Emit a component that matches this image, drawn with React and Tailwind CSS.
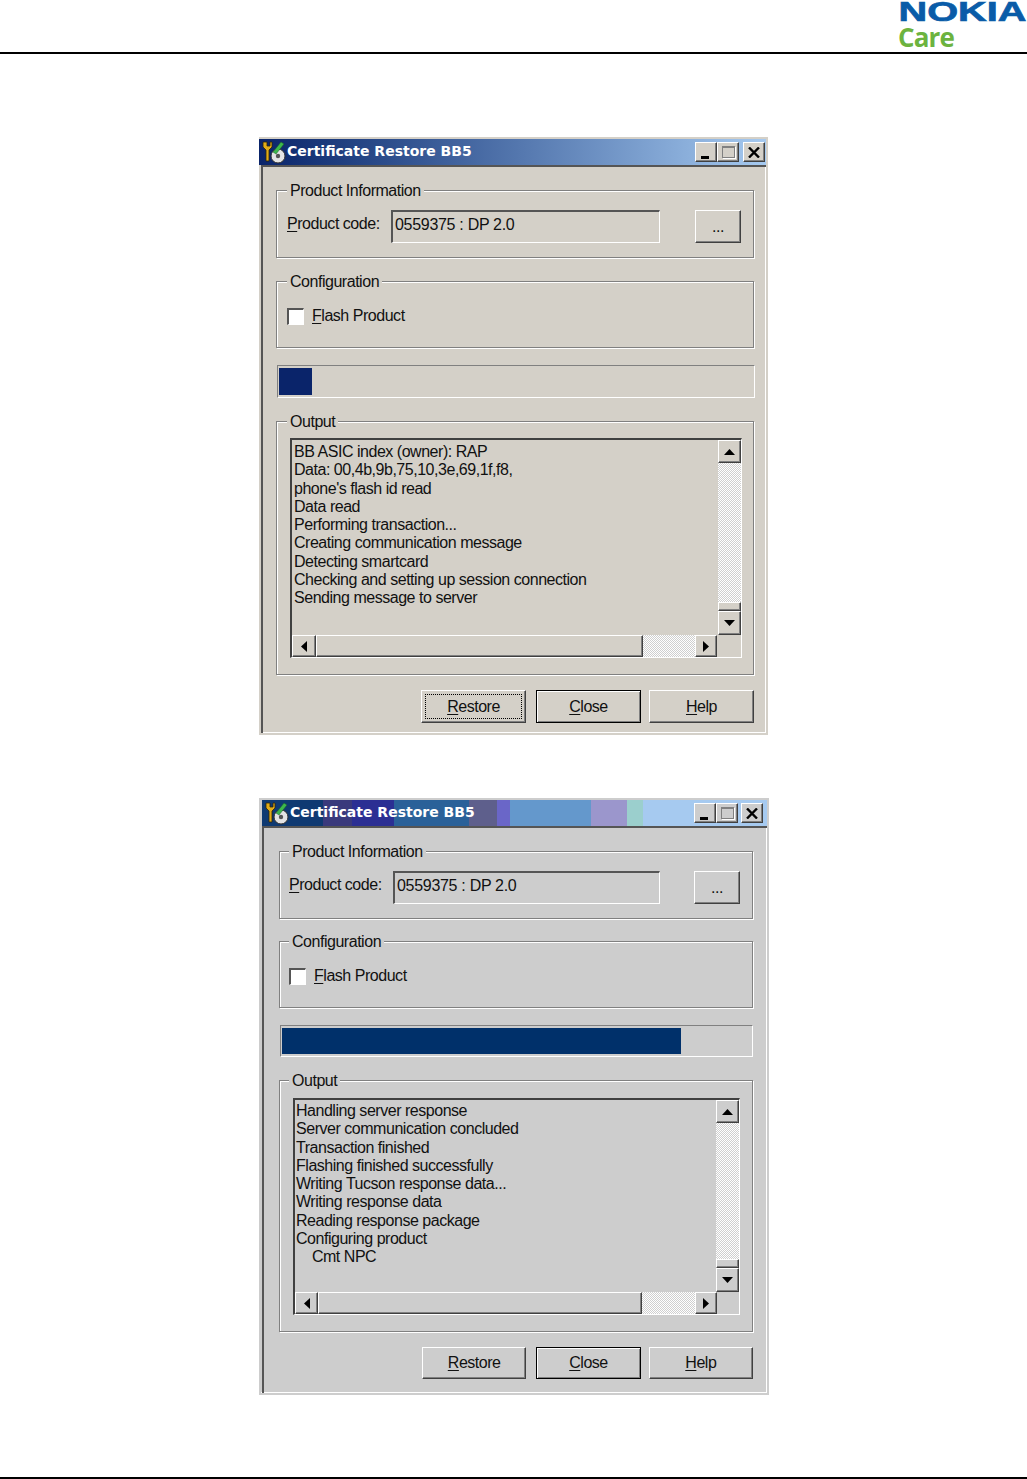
import React from 'react';

const FONT = { fontFamily: '"Liberation Sans", Arial, sans-serif' };

const WINDOWS = [
  {
    bg: 'bg-[#d4d0c8]',
    shell: 'ml-[259px] mt-[83px] w-[509px] h-[598px] border-[#d4d0c8]',
    title: 'bg-gradient-to-r from-[#0a246a] to-[#a6caf0] -ml-[2px] pl-[3px] pr-[1px]',
    closeGap: 'ml-[4px]',
    body: 'pl-[13px] pr-[12px]',
    groupPad: 'pl-[10px]',
    legend: 'left-[10px]',
    fieldW: 'w-[269px]',
    browseGap: 'ml-[35px]',
    bar: 'bg-[#0a246a]',
    progress: '7%',
    configGap: 'mt-[23px]',
    progressBox: 'h-[33px] ml-[1px] -mr-[1px]',
    outputH: 'h-[254px]',
    boxW: 'mt-[16px] mr-[11px] h-[220px]',
    boxText: 'pl-[2px] pt-[3px]',
    scroll: { left: 'w-[24px]', thumb: 'w-[327px]', dither: 'w-[52px]' },
    buttons: 'pl-[145px] h-[33px]',
    focus: 'restore',
    active: 'close',
    lines: [
      'BB ASIC index (owner): RAP',
      'Data: 00,4b,9b,75,10,3e,69,1f,f8,',
      "phone's flash id read",
      'Data read',
      'Performing transaction...',
      'Creating communication message',
      'Detecting smartcard',
      'Checking and setting up session connection',
      'Sending message to server',
    ],
  },
  {
    bg: 'bg-[#cdcdcd]',
    shell: 'ml-[259px] mt-[63px] w-[510px] h-[597px] pl-[1px] border-[#cdcdcd]',
    title: 'bg-[#a6caf0] pl-[3px] pr-[4px]',
    bands: true,
    closeGap: 'ml-[3px]',
    body: 'pl-[15px] pr-[14px]',
    groupPad: 'pl-[9px]',
    legend: 'left-[9px]',
    fieldW: 'w-[267px]',
    browseGap: 'ml-[34px]',
    bar: 'bg-[#00306a]',
    progress: '85%',
    configGap: 'mt-[22px]',
    progressBox: 'h-[32px] ml-[1px]',
    outputH: 'h-[252px]',
    boxW: 'mt-[17px] mr-[12px] h-[217px]',
    boxText: 'pl-[1px] pt-[2px]',
    scroll: { left: 'w-[23px]', thumb: 'w-[324px]', dither: 'w-[53px]' },
    buttons: 'pl-[143px] h-[32px]',
    active: 'close',
    lines: [
      'Handling server response',
      'Server communication concluded',
      'Transaction finished',
      'Flashing finished successfully',
      'Writing Tucson response data...',
      'Writing response data',
      'Reading response package',
      'Configuring product',
      '\u00a0\u00a0\u00a0\u00a0Cmt NPC',
    ],
  },
];

const Raised = ({ className = '', children }) => (
  <div className={`flex items-center justify-center border border-t-white border-l-white border-r-[#404040] border-b-[#404040] shadow-[inset_-1px_-1px_0_#808080] ${className}`}>
    {children}
  </div>
);

// Etched win2k group box, label sits over the top border
const Group = ({ label, win, className = '', children }) => (
  <div className={`relative border border-[#808080] shadow-[1px_1px_0_#fff,inset_1px_1px_0_#fff] ${className}`}>
    <span className={`absolute top-[-9px] px-[3px] text-[16px] leading-[18px] tracking-[-0.47px] text-[#111] ${win.legend} ${win.bg}`}>{label}</span>
    {children}
  </div>
);

const Key = ({ children }) => <span className="underline underline-offset-2">{children}</span>;

const AppIcon = () => (
  <svg width="24" height="24" viewBox="0 0 24 24" className="shrink-0">
    <path d="M1 2v5l3 3v11h3V10l3-3V2H8v4H5V2z" fill="#e0ac18" stroke="#2e2408" strokeWidth="0.8" />
    <circle cx="16" cy="16" r="7" fill="#e4e4e4" stroke="#303030" />
    <circle cx="16" cy="16" r="2.2" fill="#555" />
    <path d="M11 12l8-10 3 2-8 10z" fill="#3cb84c" stroke="#1d5a26" strokeWidth="0.5" />
  </svg>
);

const TitleBands = () => (
  <div className="absolute inset-0 flex">
    <div className="w-[61px] bg-[#0f3a72]" />
    <div className="w-[29px] bg-[#3a3a7c]" />
    <div className="w-[42px] bg-[#2b2f93]" />
    <div className="w-[75px] bg-[#2a6199]" />
    <div className="w-[28px] bg-[#5e5f8c]" />
    <div className="w-[13px] bg-[#6a66c8]" />
    <div className="w-[81px] bg-[#6498cc]" />
    <div className="w-[36px] bg-[#9b96cc]" />
    <div className="w-[16px] bg-[#9bcfcd]" />
  </div>
);

const TitleBar = ({ win }) => (
  <div className={`relative flex h-[26px] items-center ${win.title}`}>
    {win.bands && <TitleBands />}
    <div className="relative flex flex-1 items-center gap-[1px]">
      <AppIcon />
      <span className="pb-[2px] text-[14px] font-bold leading-none text-white" style={{ fontFamily: '"DejaVu Sans", sans-serif' }}>Certificate Restore BB5</span>
    </div>
    <div className="relative flex items-center">
      <Raised className={`h-[20px] w-[22px] ${win.bg} items-end justify-start pb-[2px] pl-[5px]`}><div className="h-[3px] w-[8px] bg-black" /></Raised>
      <Raised className={`h-[20px] w-[22px] ${win.bg}`}><div className="h-[12px] w-[13px] border border-t-2 border-[#808080] shadow-[1px_1px_0_#fff]" /></Raised>
      <Raised className={`h-[20px] w-[22px] ${win.closeGap} ${win.bg}`}>
        <svg width="12" height="11" viewBox="0 0 12 11"><path d="M1 0.5l10 10M11 0.5l-10 10" stroke="#000" strokeWidth="2.4" /></svg>
      </Raised>
    </div>
  </div>
);

const Arrow = ({ dir }) => {
  const points = { up: '0,6 11,6 5.5,0', down: '0,0 11,0 5.5,6', left: '6,0 6,11 0,5.5', right: '0,0 0,11 6,5.5' }[dir];
  const size = dir === 'up' || dir === 'down' ? { width: 11, height: 6 } : { width: 6, height: 11 };
  return <svg {...size}><polygon points={points} fill="#000" /></svg>;
};

const Dither = 'bg-[repeating-conic-gradient(#fff_0_25%,#cfcfcf_0_50%)] bg-[length:2px_2px]';

const OutputBox = ({ win }) => (
  <div className={`ml-[13px] flex flex-col border border-t-2 border-l-2 border-t-[#404040] border-l-[#404040] border-r-white border-b-white ${win.boxW}`}>
    <div className="flex min-h-0 flex-1">
      <div className={`flex-1 text-[16px] leading-[18.3px] tracking-[-0.47px] text-[#111] ${win.boxText}`}>
        {win.lines.map((line, i) => <div key={i} className="whitespace-pre">{line}</div>)}
      </div>
      <div className="flex w-[23px] flex-col">
        <Raised className={`h-[23px] ${win.bg}`}><Arrow dir="up" /></Raised>
        <div className={`flex-1 ${Dither}`} />
        <Raised className={`h-[9px] ${win.bg}`} />
        <Raised className={`h-[24px] ${win.bg}`}><Arrow dir="down" /></Raised>
      </div>
    </div>
    <div className="flex h-[22px]">
      <Raised className={`${win.scroll.left} ${win.bg}`}><Arrow dir="left" /></Raised>
      <Raised className={`${win.scroll.thumb} ${win.bg}`} />
      <div className={`${win.scroll.dither} ${Dither}`} />
      <Raised className={`w-[22px] ${win.bg}`}><Arrow dir="right" /></Raised>
    </div>
  </div>
);

const PushButton = ({ active, focus, className = '', children }) => {
  const label = `flex-1 text-[16px] tracking-[-0.47px] text-[#111] ${className}`;
  if (active) {
    return (
      <div className={`flex items-center justify-center border border-black shadow-[inset_1px_1px_0_#fff,inset_-1px_-1px_0_#808080] ${label}`}>
        {children}
      </div>
    );
  }
  return (
    <Raised className={label}>
      {focus ? <div className="m-[3px] flex h-[calc(100%-6px)] flex-1 items-center justify-center border border-dotted border-black">{children}</div> : children}
    </Raised>
  );
};

const DialogWindow = ({ win }) => (
  <div className={`flex flex-col border-2 shadow-[inset_-1px_-1px_0_#fff] ${win.bg} ${win.shell}`} style={FONT}>
    <TitleBar win={win} />
    <div className={`flex flex-1 flex-col border-t-2 border-l-2 border-[#555] pt-[23px] ${win.body}`}>
      <Group label="Product Information" win={win} className="h-[68px]">
        <div className={`flex items-center pt-[19px] text-[16px] tracking-[-0.47px] text-[#111] ${win.groupPad}`}>
          <span className="mb-[5px] w-[104px]"><Key>P</Key>roduct code:</span>
          <div className={`flex h-[33px] items-center border border-t-2 border-l-2 border-t-[#555] border-l-[#555] border-r-white border-b-white pb-[4px] pl-[2px] tracking-[-0.3px] ${win.fieldW}`}>0559375 : DP 2.0</div>
          <Raised className={`h-[33px] w-[46px] ${win.browseGap}`}>...</Raised>
        </div>
      </Group>

      <Group label="Configuration" win={win} className={`h-[67px] ${win.configGap}`}>
        <div className={`flex items-center gap-[8px] pt-[22px] text-[16px] tracking-[-0.47px] text-[#111] ${win.groupPad}`}>
          <div className="h-[17px] w-[17px] border border-t-2 border-l-2 border-t-[#555] border-l-[#555] border-r-white border-b-white bg-white" />
          <span><Key>F</Key>lash Product</span>
        </div>
      </Group>

      <div className={`mt-[17px] border border-t-[#808080] border-l-[#808080] border-r-white border-b-white px-[1px] py-[2px] ${win.progressBox}`}>
        <div className={`h-full ${win.bar}`} style={{ width: win.progress }} />
      </div>

      <Group label="Output" win={win} className={`mt-[23px] ${win.outputH}`}>
        <OutputBox win={win} />
      </Group>

      <div className={`mt-[15px] flex gap-[8px] ${win.buttons}`}>
        <PushButton focus={win.focus === 'restore'}><span><Key>R</Key>estore</span></PushButton>
        <PushButton active={win.active === 'close'} className="ml-[2px]"><span><Key>C</Key>lose</span></PushButton>
        <PushButton><span><Key>H</Key>elp</span></PushButton>
      </div>
    </div>
  </div>
);

export default function App() {
  return (
    <div className="flex h-[1479px] w-[1027px] flex-col overflow-hidden bg-white">
      <header className="h-[54px] border-b-2 border-black">
        <div className="ml-[898px] flex flex-col">
          <svg width="129" height="24" viewBox="0 0 129 24">
            <text x="0.5" y="21" textLength="128" lengthAdjust="spacingAndGlyphs" fontSize="28.5" fontWeight="700" fill="#0a5ca8" stroke="#0a5ca8" strokeWidth="0.7" style={FONT}>NOKIA</text>
          </svg>
          <span className="text-[26px] font-bold leading-[27px] tracking-[-0.9px] text-[#6cb33f]" style={{ fontFamily: '"Open Sans", sans-serif' }}>Care</span>
        </div>
      </header>
      {WINDOWS.map((win, i) => <DialogWindow key={i} win={win} />)}
      <div className="mt-auto h-[2px] bg-black" />
    </div>
  );
}
